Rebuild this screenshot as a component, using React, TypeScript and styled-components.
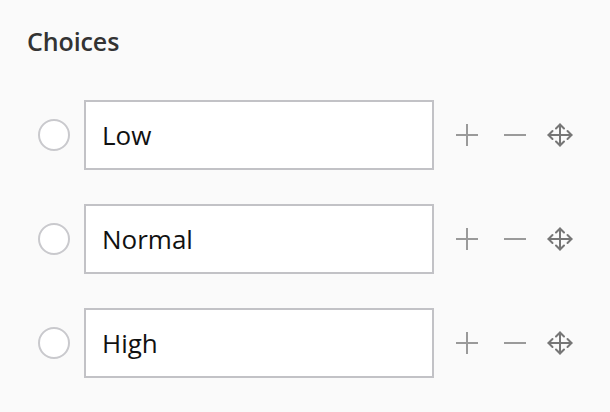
import React from "react";
import styled, { createGlobalStyle } from "styled-components";

const Global = createGlobalStyle`
  html, body { margin: 0; padding: 0; background: #fafafa; }
  body { font-family: "Open Sans", "Lato", sans-serif; }
`;

const Page = styled.div`
  width: 610px;
  height: 412px;
  box-sizing: border-box;
  padding: 26px 0 0 27px;
  background: #fafafa;
`;

const Heading = styled.h2`
  margin: 0;
  font-size: 25px;
  line-height: 30px;
  font-weight: 600;
  letter-spacing: -0.1px;
  color: #333333;
`;

const List = styled.div`
  display: flex;
  flex-direction: column;
  gap: 34px;
  margin-top: 44px;
`;

const Row = styled.div`
  display: flex;
  align-items: center;
  height: 70px;
`;

const Radio = styled.span`
  width: 28px;
  height: 28px;
  border: 2px solid #c9c9cd;
  border-radius: 50%;
  box-sizing: content-box;
  margin-left: 11px;
  background: #fff;
  flex: none;
`;

const Field = styled.input`
  margin-left: 14px;
  width: 350px;
  height: 70px;
  box-sizing: border-box;
  border: 2px solid #c2c2c6;
  background: #fff;
  padding: 0 16px;
  font-family: "Open Sans", "Lato", sans-serif;
  font-size: 26px;
  color: #111;
  outline: none;
`;

const Actions = styled.div`
  display: flex;
  align-items: center;
  margin-left: 22px;
`;

const IconBtn = styled.button<{ $w: number; $ml: number }>`
  border: none;
  background: none;
  padding: 0;
  width: ${(p) => p.$w}px;
  height: 24px;
  margin-left: ${(p) => p.$ml}px;
  display: flex;
  align-items: center;
  justify-content: center;
  cursor: pointer;
`;

const Plus = () => (
  <svg width="22" height="22" viewBox="0 0 22 22">
    <path d="M11 0V22M0 11H22" stroke="#9a9a9a" strokeWidth="2" />
  </svg>
);

const Minus = () => (
  <svg width="22" height="22" viewBox="0 0 22 22">
    <path d="M0 11H22" stroke="#9a9a9a" strokeWidth="2" />
  </svg>
);

const Move = () => (
  <svg width="26" height="24" viewBox="0 0 26 24" fill="none" stroke="#767676" strokeWidth="2" strokeLinecap="round" strokeLinejoin="round">
    <path d="M13 1.5V22.5M1.5 12H24.5" />
    <path d="M9 5.5L13 1.5L17 5.5M9 18.5L13 22.5L17 18.5M5.5 8L1.5 12L5.5 16M20.5 8L24.5 12L20.5 16" />
  </svg>
);

const choices = ["Low", "Normal", "High"];

export default function App() {
  return (
    <>
      <Global />
      <Page>
        <Heading>Choices</Heading>
        <List>
          {choices.map((c) => (
            <Row key={c}>
              <Radio />
              <Field defaultValue={c} />
              <Actions>
                <IconBtn aria-label="add" $w={22} $ml={0}><Plus /></IconBtn>
                <IconBtn aria-label="remove" $w={22} $ml={26}><Minus /></IconBtn>
                <IconBtn aria-label="move" $w={26} $ml={21}><Move /></IconBtn>
              </Actions>
            </Row>
          ))}
        </List>
      </Page>
    </>
  );
}
